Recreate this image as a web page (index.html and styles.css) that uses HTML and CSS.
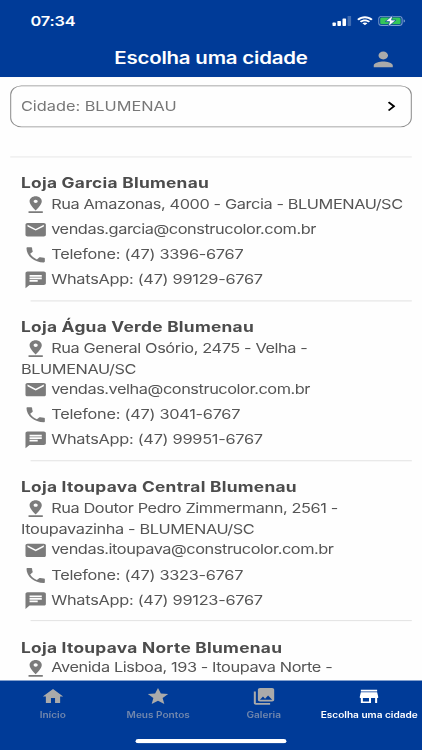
FILE: index.html
```html
<!DOCTYPE html>
<html lang="pt-BR">
<head>
    <meta charset="UTF-8">
    <meta name="viewport" content="width=device-width, initial-scale=1.0">
    <title>Escolha uma cidade</title>
    <link rel="stylesheet" href="styles.css">
</head>
<body>
    <!-- Shared icons -->
    <svg class="sprite">
        <symbol id="pin" viewBox="0 0 24 24"><path d="M18 8c0-3.310-2.690-6-6-6S6 4.690 6 8c0 4.500 6 11 6 11s6-6.500 6-11zm-8 0c0-1.100.9-2 2-2s2 .9 2 2-.89 2-2 2c-1.100 0-2-.9-2-2zM5 20v2h14v-2H5z"/></symbol>
        <symbol id="mail" viewBox="0 0 24 24"><path d="M20 4H4c-1.100 0-2 .9-2 2v12c0 1.100.9 2 2 2h16c1.100 0 2-.9 2-2V6c0-1.100-.9-2-2-2zm0 4l-8 5-8-5V6l8 5 8-5v2z"/></symbol>
        <symbol id="phone" viewBox="0 0 24 24"><path d="M6.620 10.790c1.440 2.830 3.760 5.140 6.590 6.590l2.200-2.200c.27-.27.67-.36 1.020-.24 1.120.37 2.330.57 3.570.57.55 0 1 .45 1 1V20c0 .55-.45 1-1 1-9.390 0-17-7.610-17-17 0-.55.45-1 1-1h3.500c.55 0 1 .45 1 1 0 1.250.2 2.450.57 3.570.11.35.03.74-.25 1.020l-2.200 2.200z"/></symbol>
        <symbol id="chat" viewBox="0 0 24 24"><path d="M20 2H4c-1.100 0-2 .9-2 2v18l4-4h14c1.100 0 2-.9 2-2V4c0-1.100-.9-2-2-2zM6 9h12v2H6V9zm8 5H6v-2h8v2zm4-6H6V6h12v2z"/></symbol>
    </svg>

    <div class="screen">
        <header>
            <div class="status">
                <span class="time">07:34</span>
                <span class="status-icons">
                    <svg class="signal" viewBox="0 0 19 12">
                        <rect x="0" y="8" width="3.500" height="4" rx=".8"/>
                        <rect x="5" y="6" width="3.500" height="6" rx=".8"/>
                        <rect x="10" y="3" width="3.500" height="9" rx=".8"/>
                        <rect x="15" y="0" width="3.500" height="12" rx=".8" opacity=".25"/>
                    </svg>
                    <svg class="wifi" viewBox="0 0 17 12">
                        <path d="M8.500 2.600c2.300 0 4.500.9 6.200 2.500.1.100.3.100.5 0l1.200-1.200c.1-.1.100-.4 0-.5C12 -.9 5-.9.600 3.400c-.1.100-.1.400 0 .5l1.200 1.200c.2.100.4.100.5 0C4 3.500 6.200 2.600 8.500 2.600zM8.500 6.500c1.300 0 2.500.5 3.400 1.300.2.100.4.100.5 0l1.200-1.200c.2-.2.200-.4 0-.5-2.900-2.700-7.300-2.700-10.200 0-.2.100-.2.300 0 .5l1.200 1.200c.1.100.3.100.5 0 .9-.8 2.100-1.300 3.400-1.300zM10.800 9.200c.2-.2.200-.4 0-.5-1.300-1.100-3.300-1.100-4.600 0-.2.100-.2.300 0 .5l2.100 2c.1.200.3.200.4 0z"/>
                    </svg>
                    <svg class="battery" viewBox="0 0 27 14">
                        <rect x=".5" y="1.500" width="23" height="11" rx="3" fill="none" stroke="#7d9fce"/>
                        <rect x="2" y="3" width="20" height="8" rx="1.600" fill="#34c759"/>
                        <path d="M25 5v4c1.800-.7 1.800-3.300 0-4z" fill="#7d9fce"/>
                        <path d="M14.500 0L7 7.800h4.200L9.800 14 17.500 6h-4.400z" stroke="#003b98" stroke-width=".7"/>
                    </svg>
                </span>
            </div>
            <div class="toolbar">
                <h1>Escolha uma cidade</h1>
                <svg class="user" viewBox="0 0 24 24"><path d="M12 12c2.210 0 4-1.790 4-4s-1.790-4-4-4-4 1.790-4 4 1.790 4 4 4zm0 2c-2.670 0-8 1.340-8 4v2h16v-2c0-2.660-5.330-4-8-4z"/></svg>
            </div>
        </header>

        <main>
            <div class="city">
                <span>Cidade: BLUMENAU</span>
                <svg class="chevron" viewBox="0 0 8 12"><path d="M1.200 1l5.300 5-5.300 5"/></svg>
            </div>

            <div class="stores">
                <section class="store">
                    <h2>Loja Garcia Blumenau</h2>
                    <p><svg><use href="#pin"/></svg>Rua Amazonas, 4000 - Garcia - BLUMENAU/SC</p>
                    <p class="email"><svg><use href="#mail"/></svg>vendas.garcia@construcolor.com.br</p>
                    <p class="phone"><svg><use href="#phone"/></svg>Telefone: (47) 3396-6767</p>
                    <p class="phone"><svg><use href="#chat"/></svg>WhatsApp: (47) 99129-6767</p>
                </section>
                <section class="store">
                    <h2>Loja Água Verde Blumenau</h2>
                    <p><svg><use href="#pin"/></svg>Rua General Osório, 2475 - Velha -<br>BLUMENAU/SC</p>
                    <p class="email"><svg><use href="#mail"/></svg>vendas.velha@construcolor.com.br</p>
                    <p class="phone"><svg><use href="#phone"/></svg>Telefone: (47) 3041-6767</p>
                    <p class="phone"><svg><use href="#chat"/></svg>WhatsApp: (47) 99951-6767</p>
                </section>
                <section class="store">
                    <h2>Loja Itoupava Central Blumenau</h2>
                    <p><svg><use href="#pin"/></svg>Rua Doutor Pedro Zimmermann, 2561 -<br>Itoupavazinha - BLUMENAU/SC</p>
                    <p class="email"><svg><use href="#mail"/></svg>vendas.itoupava@construcolor.com.br</p>
                    <p class="phone"><svg><use href="#phone"/></svg>Telefone: (47) 3323-6767</p>
                    <p class="phone"><svg><use href="#chat"/></svg>WhatsApp: (47) 99123-6767</p>
                </section>
                <section class="store">
                    <h2>Loja Itoupava Norte Blumenau</h2>
                    <p><svg><use href="#pin"/></svg>Avenida Lisboa, 193 - Itoupava Norte -</p>
                </section>
            </div>
        </main>

        <footer>
            <nav>
                <a class="tab">
                    <svg viewBox="0 0 24 24"><path d="M10 20v-6h4v6h5v-8h3L12 3 2 12h3v8z"/></svg>
                    <span>Início</span>
                </a>
                <a class="tab">
                    <svg viewBox="0 0 24 24"><path d="M12 17.270L18.180 21l-1.640-7.030L22 9.240l-7.190-.61L12 2 9.190 8.630 2 9.240l5.460 4.730L5.820 21z"/></svg>
                    <span>Meus Pontos</span>
                </a>
                <a class="tab">
                    <svg viewBox="0 0 24 24"><path d="M22 16V4c0-1.100-.9-2-2-2H8c-1.100 0-2 .9-2 2v12c0 1.100.9 2 2 2h12c1.100 0 2-.9 2-2zm-11-4l2.030 2.710L16 11l4 5H8l3-4zM2 6v14c0 1.100.9 2 2 2h14v-2H4V6H2z"/></svg>
                    <span>Galeria</span>
                </a>
                <a class="tab active">
                    <svg viewBox="0 0 24 24"><path d="M20 4H4v2h16V4zm1 10v-2l-1-5H4l-1 5v2h1v6h10v-6h4v6h2v-6h1zm-9 4H6v-4h6v4z"/></svg>
                    <span>Escolha uma cidade</span>
                </a>
            </nav>
            <div class="home-bar"></div>
        </footer>
    </div>
</body>
</html>
```
FILE: styles.css
```css
* {
    box-sizing: border-box;
}
body {
    margin: 0;
    width: 422px;
    height: 750px;
    overflow: hidden;
    font-family: Inter, "Liberation Sans", sans-serif;
    background-color: #fefefe;
}
h1, h2, p {
    margin: 0;
}
svg {
    fill: currentColor;
    flex-shrink: 0;
}
.sprite {
    display: none;
}
/* 414x896 phone layout stretched to the window */
.screen {
    display: flex;
    flex-direction: column;
    width: 414px;
    height: 896px;
    margin-bottom: -146px;
    transform: scale(1.01932, 0.83705);
    transform-origin: 0 0;
}
header {
    height: 92px;
    flex-shrink: 0;
    background-color: #003b98;
    color: #fff;
}
.status {
    display: flex;
    justify-content: space-between;
    align-items: center;
    height: 48px;
    padding: 2px 16px 0 30px;
}
.time {
    font-size: 16px;
    font-weight: 600;
    letter-spacing: -0.2px;
}
.status-icons {
    display: flex;
    align-items: center;
    gap: 5px;
}
.signal {
    width: 19px;
    height: 12px;
}
.wifi {
    width: 16px;
    height: 12px;
}
.battery {
    width: 27px;
    height: 14px;
}
.toolbar {
    display: grid;
    grid-template-columns: 52px 1fr 52px;
    align-items: center;
    height: 44px;
}
h1 {
    grid-column: 2;
    text-align: center;
    font-size: 20px;
    font-weight: 600;
    letter-spacing: -0.17px;
}
.user {
    width: 28px;
    height: 28px;
    margin-top: 1px;
    color: #aaa;
}
main {
    flex: 1;
    overflow: hidden;
    padding: 10px 10px 0;
}
.city {
    display: flex;
    align-items: center;
    justify-content: space-between;
    height: 50px;
    padding: 0 15px 0 9.500px;
    border: 1px solid #8c8c8c;
    border-radius: 11px;
    font-size: 16px;
    color: #777;
}
.chevron {
    width: 8px;
    height: 12px;
    fill: none;
    stroke: #000;
    stroke-width: 2;
}
.stores {
    margin-top: 35px;
    border-top: 1px solid #e4e4e4;
}
.store {
    position: relative;
    padding: 21.400px 0 9.800px 10.600px;
    color: #555;
}
.store::after {
    content: "";
    position: absolute;
    left: 20px;
    right: 0;
    bottom: 0;
    height: 1px;
    background-color: #dcdcdc;
}
h2 {
    font-size: 17px;
    line-height: 20.500px;
    font-weight: 700;
    letter-spacing: 0.26px;
    color: #4c4c4c;
}
p {
    font-size: 16px;
    line-height: 19.700px;
    letter-spacing: -0.38px;
    white-space: nowrap;
}
.email {
    letter-spacing: -0.42px;
}
.phone {
    letter-spacing: -0.26px;
}
p svg {
    width: 24px;
    height: 30px;
    padding-bottom: 1px;
    margin: 0 3.600px 0 2px;
    vertical-align: middle;
    color: #7b7b7b;
}
footer {
    display: flex;
    flex-direction: column;
    justify-content: space-between;
    align-items: center;
    height: 83px;
    flex-shrink: 0;
    padding: 7px 0 8px;
    background-color: #003b98;
}
nav {
    display: grid;
    grid-template-columns: repeat(4, 103.500px);
}
.tab {
    display: flex;
    flex-direction: column;
    align-items: center;
    gap: 4px;
    font-size: 9.900px;
    font-weight: 600;
    line-height: 13px;
    white-space: nowrap;
    color: #7187ad;
}
.tab svg {
    width: 24px;
    height: 24px;
    color: #aaa;
}
.active, .active svg {
    color: #fff;
}
.home-bar {
    width: 148px;
    height: 5px;
    border-radius: 3px;
    background-color: #fff;
}
```
